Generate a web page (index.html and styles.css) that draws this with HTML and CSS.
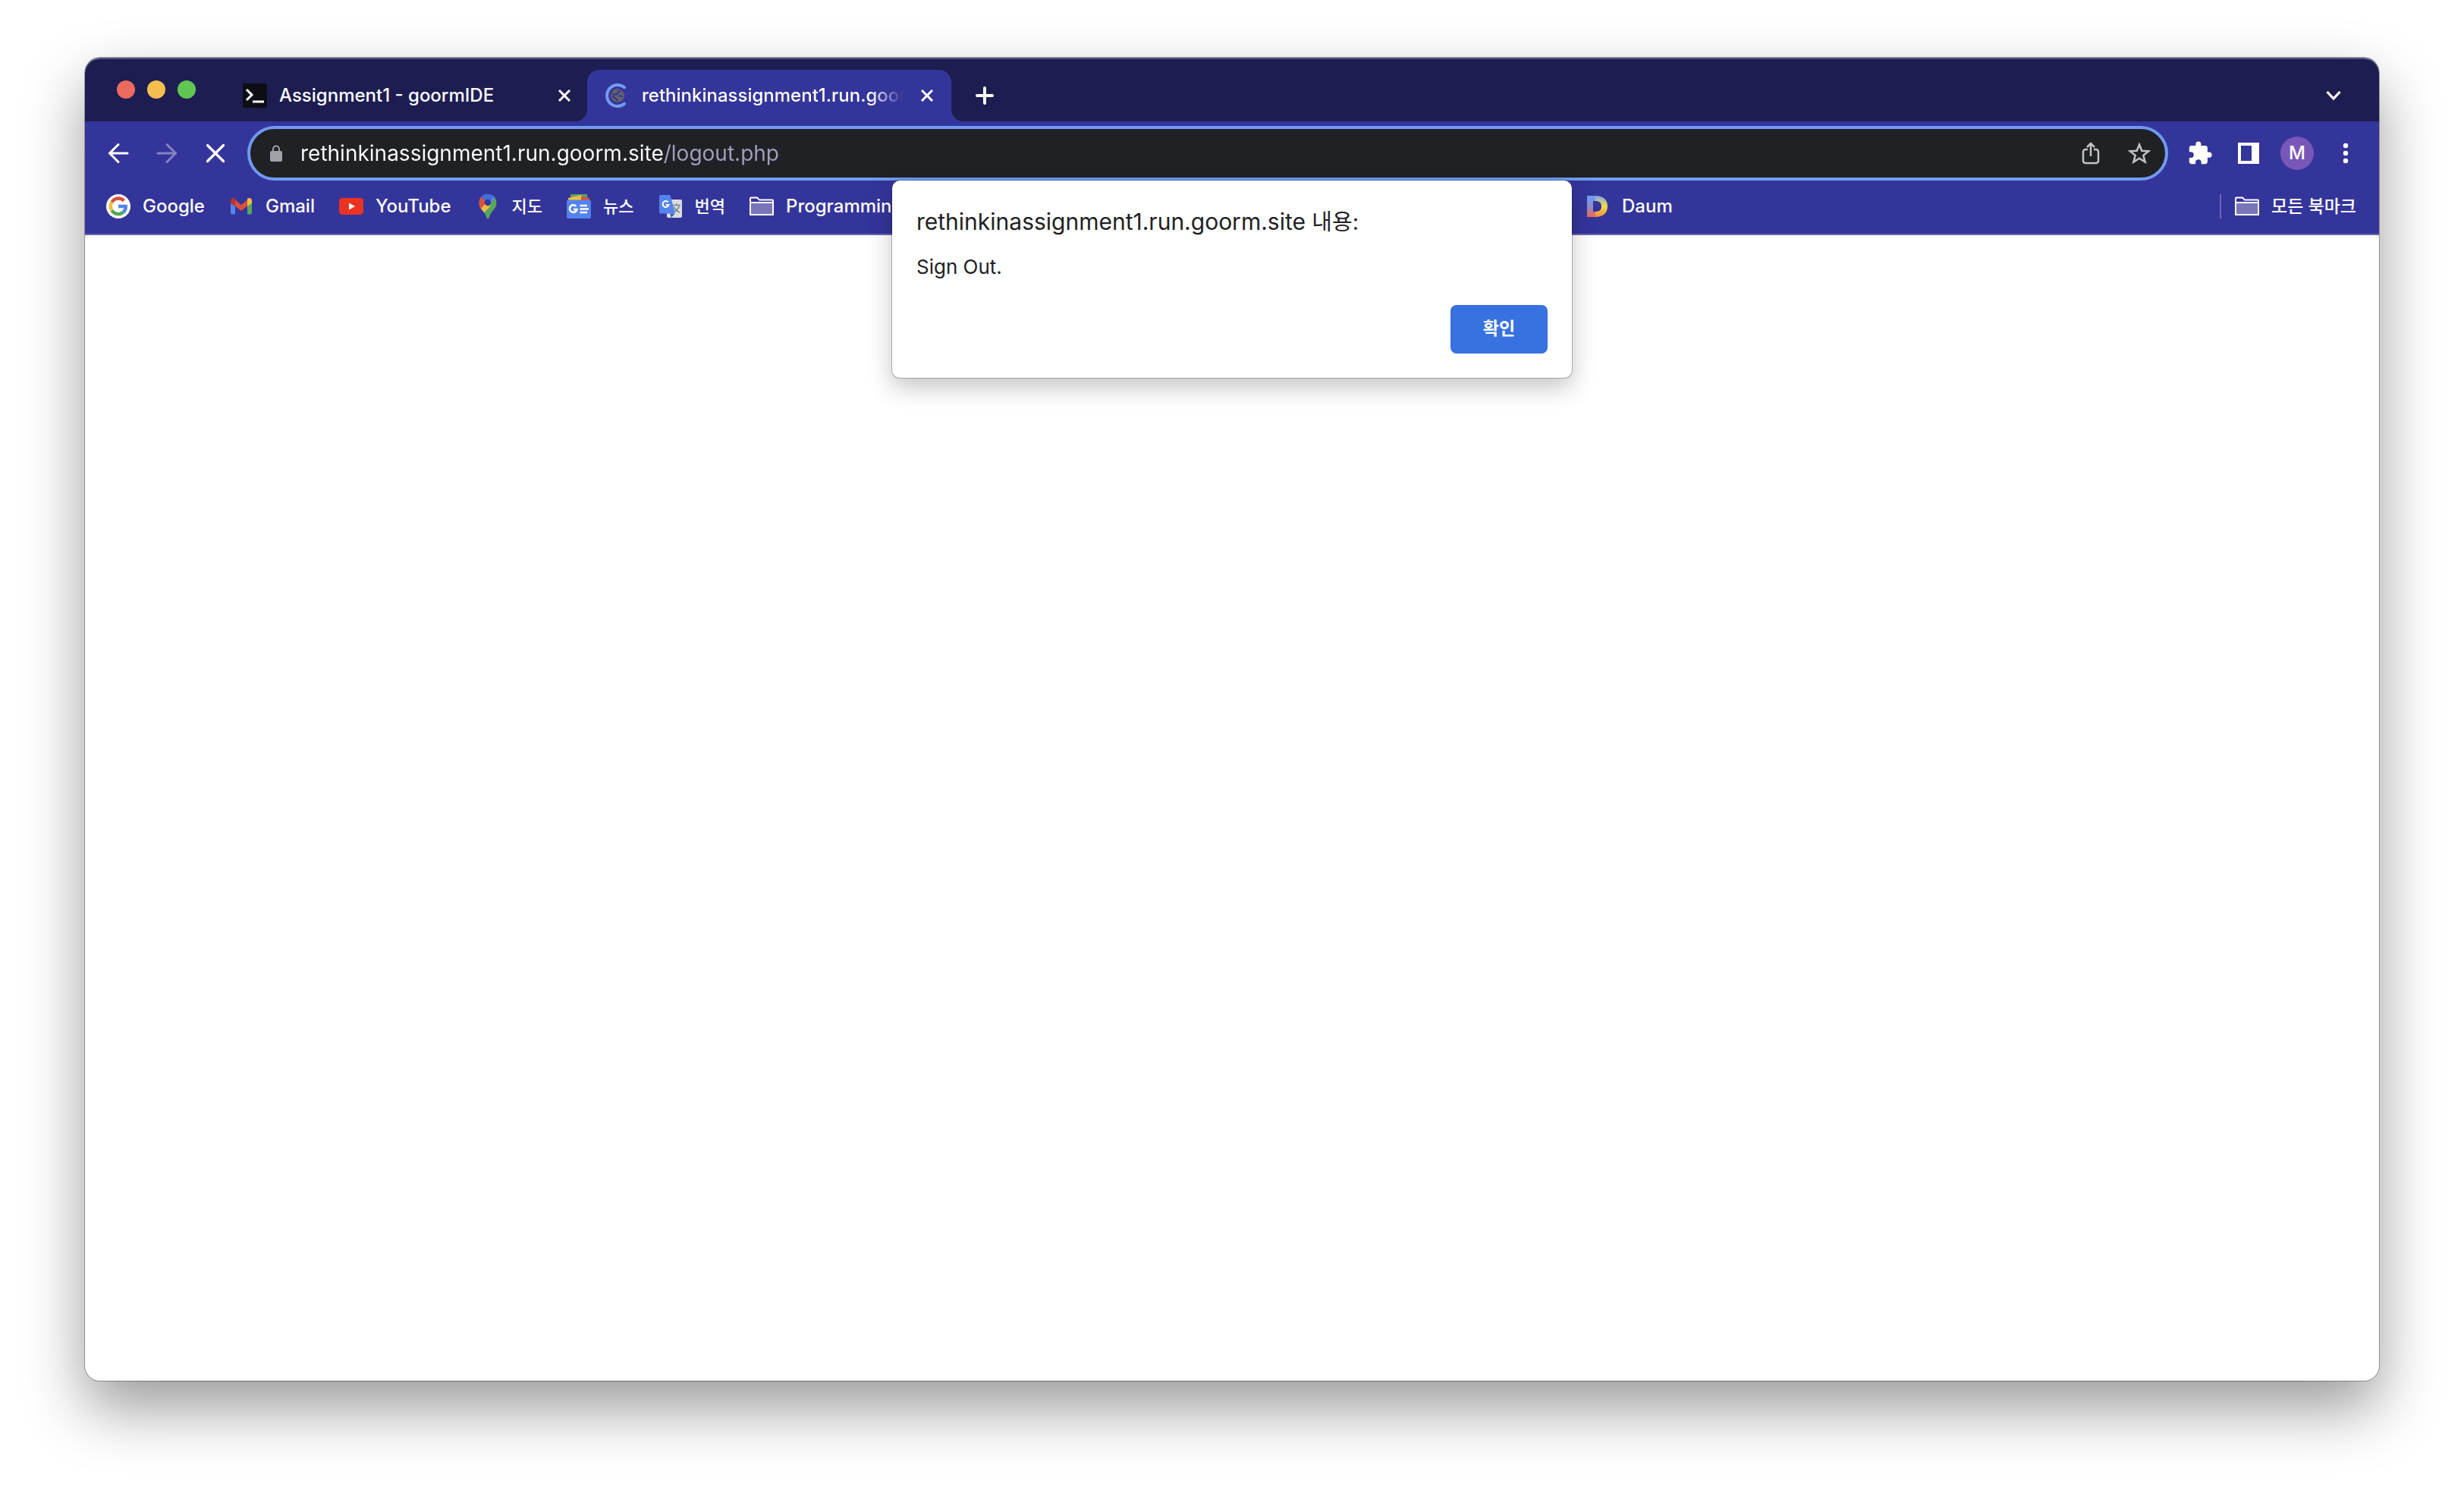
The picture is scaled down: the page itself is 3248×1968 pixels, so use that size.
FILE: index.html
```html
<!DOCTYPE html>
<html lang="ko">
<head>
<meta charset="utf-8">
<meta name="viewport" content="width=device-width, initial-scale=1">
<title>rethinkinassignment1.run.goorm.site</title>
<link rel="stylesheet" href="styles.css">
</head>
<body>
<div class="window">
  <header class="tab-strip">
    <div class="lights">
      <button class="light light-close" aria-label="닫기"></button>
      <button class="light light-min" aria-label="최소화"></button>
      <button class="light light-max" aria-label="최대화"></button>
    </div>
    <div class="tab">
      <svg class="icon" viewBox="0 0 32 32" aria-hidden="true"><rect width="32" height="32" rx="2" fill="#0b0f14"/><path d="M5 8l7 7-7 7" fill="none" stroke="#fff" stroke-width="3"/><path d="M13 24h15" stroke="#fff" stroke-width="3"/></svg>
      <span class="tab-title">Assignment1 - goormIDE</span>
      <button class="tab-close" aria-label="탭 닫기"><svg viewBox="0 0 16 16"><path d="M1 1l14 14M15 1L1 15"/></svg></button>
    </div>
    <div class="tab tab-active">
      <svg class="icon" viewBox="0 0 32 32" aria-hidden="true"><path d="M25 5.200A14 14 0 1 0 25 26.800" fill="none" stroke="#739cf0" stroke-width="4" stroke-linecap="round"/><circle cx="16" cy="16" r="9" fill="#626368"/><path d="M8.500 13c2 2 3 2 6 1.500 1-2 3-2 3-4l3-1M17 16.500c3-1 4 1 6 1M9 18c3-1 3 2 5 2 2 1 1 3 3 3" fill="none" stroke="#34359a" stroke-width="2"/></svg>
      <span class="tab-title tab-title-fade">rethinkinassignment1.run.goorm.site</span>
      <button class="tab-close" aria-label="탭 닫기"><svg viewBox="0 0 16 16"><path d="M1 1l14 14M15 1L1 15"/></svg></button>
    </div>
    <button class="strip-button new-tab" aria-label="새 탭"><svg width="24" height="24" viewBox="0 0 24 24"><path d="M12 2v20M2 12h20" fill="none" stroke="#fff" stroke-width="4" stroke-linecap="round"/></svg></button>
    <button class="strip-button tab-search" aria-label="탭 검색"><svg width="20" height="12" viewBox="0 0 20 12"><path d="M1.500 1L10 10l8.500-9" fill="none" stroke="#fff" stroke-width="3.200"/></svg></button>
  </header>

  <nav class="toolbar">
    <button class="tool" aria-label="뒤로"><svg width="28" height="28" viewBox="0 0 28 28"><path d="M26 14H3M14 2.500L2.500 14 14 25.500" fill="none" stroke="#fff" stroke-width="3" stroke-linecap="round"/></svg></button>
    <button class="tool" aria-label="앞으로"><svg width="28" height="28" viewBox="0 0 28 28"><path d="M2 14h23M14 2.500L25.500 14 14 25.500" fill="none" stroke="#8683c1" stroke-width="3" stroke-linecap="round"/></svg></button>
    <button class="tool" aria-label="중지"><svg width="28" height="28" viewBox="0 0 28 28"><path d="M3.500 3.500l21 21M24.500 3.500l-21 21" fill="none" stroke="#fff" stroke-width="3.200" stroke-linecap="round"/></svg></button>
    <div class="omnibox">
      <svg class="lock" width="16" height="22" viewBox="0 0 16 22" aria-hidden="true"><rect y="8" width="16" height="14" rx="2" fill="#9fa3a7"/><path d="M4 9V5.500a4 4 0 0 1 8 0V9" fill="none" stroke="#9fa3a7" stroke-width="2"/></svg>
      <input class="url" type="text" aria-label="주소창" value="rethinkinassignment1.run.goorm.site/logout.php">
      <button class="tool" aria-label="공유"><svg width="24" height="32" viewBox="0 0 24 32"><path d="M8 11H5a3 3 0 0 0-3 3v12a3 3 0 0 0 3 3h14a3 3 0 0 0 3-3V14a3 3 0 0 0-3-3h-3M12 20V4M7 8l5-5 5 5" fill="none" stroke="#c3c3c3" stroke-width="2.500"/></svg></button>
      <button class="tool" aria-label="북마크 추가"><svg width="32" height="32" viewBox="0 0 32 32"><path d="M16 4.500l3.300 8.200 8.900.6-6.900 5.600 2.300 8.600-7.600-4.800-7.600 4.800 2.300-8.600-6.900-5.600 8.900-.6z" fill="none" stroke="#c3c3c3" stroke-width="2.500"/></svg></button>
    </div>
    <button class="tool" aria-label="확장 프로그램"><svg width="34" height="34" viewBox="0 0 24 24"><path d="M20.500 11H19V7c0-1.100-.9-2-2-2h-4V3.500a2.500 2.500 0 0 0-5 0V5H4c-1.100 0-2 .9-2 2v3.800h1.500a2.700 2.700 0 0 1 0 5.400H2V20c0 1.100.9 2 2 2h3.800v-1.500a2.700 2.700 0 0 1 5.400 0V22H17c1.100 0 2-.9 2-2v-4h1.500a2.500 2.500 0 0 0 0-5z" fill="#fff"/></svg></button>
    <button class="tool" aria-label="측면 패널"><svg width="28" height="28" viewBox="0 0 28 28"><path fill="#fff" fill-rule="evenodd" d="M0 0h28v28H0zM4 4v20h14V4z"/></svg></button>
    <button class="tool" aria-label="프로필"><span class="avatar">M</span></button>
    <button class="tool" aria-label="메뉴"><svg width="8" height="28" viewBox="0 0 8 28"><g fill="#fff"><circle cx="4" cy="4" r="3.200"/><circle cx="4" cy="14" r="3.200"/><circle cx="4" cy="24" r="3.200"/></g></svg></button>
  </nav>

  <nav class="bookmarks">
    <div class="bookmark-list">
      <a class="bookmark" href="#google"><svg class="icon" viewBox="0 0 32 32"><circle cx="16" cy="16" r="16" fill="#fff"/><g fill="none" stroke-width="4.500"><path d="M23.400 8.600A10 10 0 0 0 7.500 10.500" stroke="#d9503f"/><path d="M7.500 10.500a10 10 0 0 0 0 11" stroke="#f0bd42"/><path d="M7.500 21.500a10 10 0 0 0 15.200 2" stroke="#58a55c"/><path d="M22.700 23.500A10 10 0 0 0 25.800 16H16" stroke="#5383ec"/></g></svg>Google</a>
      <a class="bookmark" href="#gmail"><svg class="icon" viewBox="0 0 32 32"><path d="M2 9h6v17.500H4a2 2 0 0 1-2-2z" fill="#5383ec"/><path d="M24 9h6v15.500a2 2 0 0 1-2 2h-4z" fill="#58a55c"/><path d="M8 7.500l8 6.500 8-6.500v8.200L16 22l-8-6.300z" fill="#d9503f"/><path d="M2 12V8.500C2 5 5.500 4 8 6v9.700L2 12z" fill="#b5342b"/><path d="M30 12V8.500C30 5 26.500 4 24 6v9.700L30 12z" fill="#f0bd42"/></svg>Gmail</a>
      <a class="bookmark" href="#youtube"><svg class="icon" viewBox="0 0 32 32"><rect y="5" width="32" height="22" rx="4.500" fill="#ea3323"/><path d="M13 11.500v9l8-4.500z" fill="#fff"/></svg>YouTube</a>
      <a class="bookmark" href="#maps"><svg class="icon" viewBox="0 0 32 32"><defs><clipPath id="pin"><path d="M16 0C9 0 4.500 5 4.500 11.500c0 4.500 2 7 5 10.500 3 3.500 4 6 4.500 8.500.5 2 3.500 2 4 0 .5-2.500 1.500-5 4.500-8.500 3-3.500 5-6 5-10.500C27.500 5 23 0 16 0z"/></clipPath></defs><g clip-path="url(#pin)"><path d="M0 0h32v32H0z" fill="#58a55c"/><path d="M8 0h20l-6 9-6 6z" fill="#5383ec"/><path d="M6 2l10 9-8 9-6-6z" fill="#d9503f"/><path d="M4 17.500L13.500 7l6 8.500L9.500 26z" fill="#f0bd42"/><path d="M4 15.500L12 6l4 3-9 10z" fill="#d9503f"/><path d="M7 4l5-5h9l3 4-8 8z" fill="#3e6fdc"/></g><circle cx="16" cy="11" r="4.200" fill="#3038a0"/></svg><span class="ko">지도</span></a>
      <a class="bookmark" href="#news"><svg class="icon" viewBox="0 0 32 32"><path d="M5 0h22v8H5z" fill="#58a55c"/><path d="M2 5l17-4 1 8H2z" fill="#f0bd42"/><path d="M19 3l11 2v5H19z" fill="#d9503f"/><rect y="7.500" width="32" height="24.500" rx="2" fill="#5383ec"/><path d="M12.500 16A4.800 4.800 0 1 0 13.500 20H9M17.500 15h9.500M17.500 19.500h11.500M17.500 24h9.500" fill="none" stroke="#fff" stroke-width="2.600"/></svg><span class="ko">뉴스</span></a>
      <a class="bookmark" href="#translate"><svg class="icon" viewBox="0 0 32 32"><rect x="11" y="7" width="20" height="24" rx="2" fill="#dcdddf"/><path d="M15 25.500h6.500L17 31z" fill="#3a5fb5"/><path d="M18.500 14.500H29M23.700 12v2.500M27.500 14.500c-1 4-3.500 7-7 9M20.500 17c1.500 3 4 5.500 7.500 7" fill="none" stroke="#7b8c95" stroke-width="1.700"/><path d="M3 1h12.500L22 25.500H3a2 2 0 0 1-2-2V3a2 2 0 0 1 2-2z" fill="#5383ec"/><path d="M12.700 10.500A4 4 0 1 0 13.500 14H9.800" fill="none" stroke="#fff" stroke-width="2"/></svg><span class="ko">번역</span></a>
      <a class="bookmark" href="#programming"><svg class="icon" viewBox="0 0 32 32"><path d="M1 27V5.500a1 1 0 0 1 1-1h8l3 3h17a1 1 0 0 1 1 1V27z" fill="#34359a" stroke="#fff" stroke-width="2"/><path d="M2 11h28v15H2z" fill="#7876b8"/><path d="M1 11h30" stroke="#fff" stroke-width="2"/></svg>Programming</a>
    </div>
    <a class="bookmark bookmark-daum" href="#daum"><svg class="icon" viewBox="0 0 32 32"><defs><linearGradient id="daum-blue" x1="0" y1="0" x2="0" y2="1"><stop offset="0" stop-color="#6f9bf5"/><stop offset=".5" stop-color="#8f8fd0"/><stop offset="1" stop-color="#ee6a50"/></linearGradient><linearGradient id="daum-gold" x1="0" y1="0" x2="0" y2="1"><stop offset="0" stop-color="#7fa6e8"/><stop offset=".5" stop-color="#f3dc4a"/><stop offset="1" stop-color="#ee8c3c"/></linearGradient></defs><path d="M2 2h12v7h-4v14h4v7H2z" fill="url(#daum-blue)"/><path d="M13 2c10 0 16 5 16 14s-6 14-16 14v-7c5 0 8-2 8-7s-3-7-8-7z" fill="url(#daum-gold)"/></svg>Daum</a>
    <a class="bookmark bookmark-all" href="#all"><svg class="icon" viewBox="0 0 32 32"><path d="M1 27V5.500a1 1 0 0 1 1-1h8l3 3h17a1 1 0 0 1 1 1V27z" fill="#34359a" stroke="#fff" stroke-width="2"/><path d="M2 11h28v15H2z" fill="#7876b8"/><path d="M1 11h30" stroke="#fff" stroke-width="2"/></svg>모든 북마크</a>
  </nav>

  <main class="page">
    <dialog class="alert" open aria-labelledby="alert-title">
      <h1 class="alert-title" id="alert-title">rethinkinassignment1.run.goorm.site <span class="alert-title-ko">내용:</span></h1>
      <p class="alert-text">Sign Out.</p>
      <button class="alert-ok">확인</button>
    </dialog>
  </main>
</div>
</body>
</html>
```
FILE: styles.css
```css
:root {
  --strip: #1d1d52;
  --toolbar: #34359a;
  --focus: #709aef;
}

* {
  box-sizing: border-box;
}

body {
  margin: 0;
  min-height: 100vh;
  padding: 76px 112px 148px;
  display: flex;
  background: #fff;
  color: #fff;
  font: 500 24px/32px Inter, "Noto Sans CJK KR", sans-serif;
}

button {
  margin: 0;
  padding: 0;
  border: 0;
  background: none;
  color: inherit;
  font: inherit;
}

svg {
  display: block;
  flex: none;
}

.icon {
  width: 32px;
  height: 32px;
}

.window {
  position: relative;
  flex: 1;
  min-width: 0;
  display: flex;
  flex-direction: column;
  border-radius: 20px;
  background: #fff;
  box-shadow: 0 0 0 1px rgba(0, 0, 0, 0.3), 0 36px 80px rgba(0, 0, 0, 0.4);
}

/* Tab strip */
.tab-strip {
  height: 84px;
  padding: 0 32px 0 42px;
  display: flex;
  align-items: flex-end;
  border-radius: 20px 20px 0 0;
  background: var(--strip);
  box-shadow: inset 0 2px 0 rgba(255, 255, 255, 0.25);
}

.lights {
  height: 84px;
  margin-right: 38px;
  display: flex;
  align-items: center;
  gap: 16px;
}

.light {
  width: 24px;
  height: 24px;
  border-radius: 50%;
}

.light-close { background: #ec6a5e; }
.light-min { background: #f5bf4f; }
.light-max { background: #61c554; }

.tab {
  position: relative;
  width: 480px;
  height: 68px;
  padding: 0 24px;
  display: flex;
  align-items: center;
  gap: 16px;
}

.tab-active {
  margin-left: -2px;
  border-radius: 16px 16px 0 0;
  background: var(--toolbar);
}

.tab-active::before,
.tab-active::after {
  content: "";
  position: absolute;
  bottom: 0;
  width: 16px;
  height: 16px;
}

.tab-active::before {
  right: 100%;
  background: radial-gradient(circle at 0 0, transparent 16px, var(--toolbar) 16px);
}

.tab-active::after {
  left: 100%;
  background: radial-gradient(circle at 100% 0, transparent 16px, var(--toolbar) 16px);
}

.tab-title {
  flex: 1;
  min-width: 0;
  overflow: hidden;
  white-space: nowrap;
}

.tab-title-fade {
  -webkit-mask-image: linear-gradient(to left, transparent 8px, #000 52px);
  mask-image: linear-gradient(to left, transparent 8px, #000 52px);
}

.tab-close {
  width: 16px;
  height: 16px;
}

.tab-close path {
  fill: none;
  stroke: #fff;
  stroke-width: 3;
}

.strip-button {
  width: 56px;
  height: 68px;
  display: grid;
  place-items: center;
}

.new-tab {
  margin-left: 16px;
}

.tab-search {
  margin-left: auto;
}

/* Toolbar */
.toolbar {
  padding: 6px 12px 0;
  display: flex;
  align-items: center;
  background: var(--toolbar);
}

.tool {
  flex: none;
  width: 64px;
  height: 64px;
  display: grid;
  place-items: center;
}

.omnibox {
  flex: 1;
  min-width: 0;
  height: 72px;
  margin: 0 10px;
  padding: 0 2px 0 26px;
  display: flex;
  align-items: center;
  border: 4px solid var(--focus);
  border-radius: 36px;
  background: #202124;
}

/* The host is white, the path after it is dimmed */
.url {
  flex: 1;
  min-width: 0;
  height: 40px;
  margin-left: 24px;
  padding: 0;
  border: 0;
  outline: 0;
  background: linear-gradient(to right, #fff 480px, #a39fbc 480px);
  -webkit-background-clip: text;
  background-clip: text;
  color: #fff;
  -webkit-text-fill-color: transparent;
  font: 400 28px/40px Inter, "Noto Sans CJK KR", sans-serif;
}

.avatar {
  width: 44px;
  height: 44px;
  border-radius: 50%;
  background: #7957b8;
  line-height: 44px;
  text-align: center;
}

/* Bookmarks bar */
.bookmarks {
  height: 72px;
  padding: 0 30px 2px 28px;
  display: flex;
  align-items: center;
  border-bottom: 2px solid #6b61b0;
  background: var(--toolbar);
}

.bookmark-list {
  flex: 0 0 1950px;
  display: flex;
  gap: 32px;
}

.bookmark {
  display: flex;
  align-items: center;
  gap: 16px;
  color: inherit;
  text-decoration: none;
  white-space: nowrap;
}

.ko {
  font-size: 22px;
}

.bookmark-all {
  margin-left: auto;
  padding-left: 18px;
  border-left: 2px solid #6b68b5;
  font-size: 23px;
}

/* Alert box, hanging from the address bar */
.page {
  flex: 1;
}

.alert {
  position: absolute;
  top: 162px;
  left: 50%;
  width: 896px;
  margin: 0 0 0 -448px;
  padding: 32px;
  display: flex;
  flex-direction: column;
  border: 0;
  border-radius: 10px;
  background: #fff;
  color: #202124;
  box-shadow: 0 0 0 1px rgba(0, 0, 0, 0.25), 0 12px 32px rgba(0, 0, 0, 0.24);
}

.alert-title {
  margin: 0;
  font-size: 30px;
  font-weight: 400;
  line-height: 44px;
}

.alert-title-ko {
  font-size: 29px;
  line-height: 1;
}

.alert-text {
  margin: 22px 0 34px;
  font-size: 26px;
  font-weight: 400;
  line-height: 32px;
}

.alert-ok {
  align-self: flex-end;
  width: 128px;
  height: 64px;
  padding-bottom: 2px;
  border-radius: 8px;
  background: #3871e0;
  color: #fff;
  font-size: 23px;
  font-weight: 600;
}
```
